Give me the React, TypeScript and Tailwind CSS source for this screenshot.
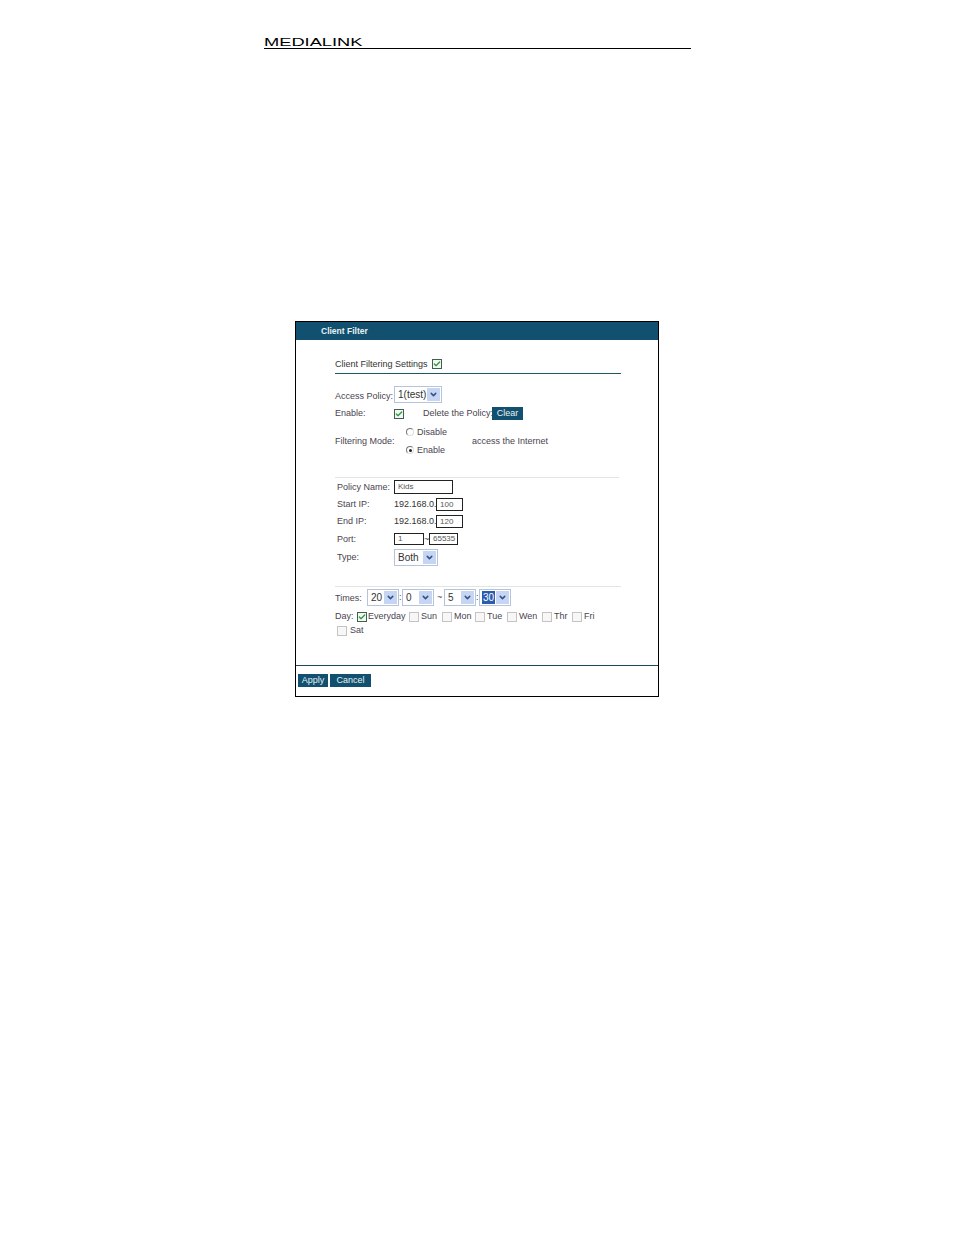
import { Check, ChevronDown } from "lucide-react";

const days = [
  { label: "Sun", width: "w-[33px]" },
  { label: "Mon", width: "w-[33px]" },
  { label: "Tue", width: "w-[32px]" },
  { label: "Wen", width: "w-[35px]" },
  { label: "Thr", width: "w-[30px]" },
  { label: "Fri", width: "w-[24px]" },
];

function CheckBox({ checked = false }: { checked?: boolean }) {
  return (
    <span
      className={`flex h-[10px] w-[10px] shrink-0 items-center justify-center border ${
        checked ? "border-[#3f5f4f] bg-[#f4f8f4]" : "border-[#c4c4c4] bg-[#f7f7f7]"
      }`}
    >
      {checked && <Check className="h-[8px] w-[8px] text-[#2e9a3c]" strokeWidth={4} />}
    </span>
  );
}

function Radio({ checked = false }: { checked?: boolean }) {
  return (
    <span className="flex h-[8px] w-[8px] shrink-0 items-center justify-center rounded-full border border-t-[#777] border-r-[#ddd] border-b-[#ddd] border-l-[#777] bg-white">
      {checked && <span className="h-[3px] w-[3px] rounded-full bg-[#222]" />}
    </span>
  );
}

function Select({
  value,
  width,
  selected = false,
}: {
  value: string;
  width: string;
  selected?: boolean;
}) {
  return (
    <div className={`flex h-[17px] items-center justify-between border border-[#b4c4dc] bg-white pr-px pl-[2px] ${width}`}>
      <span className={`px-px text-[10px] leading-[13px] ${selected ? "bg-[#2a5db0] text-white" : "text-[#333]"}`}>
        {value}
      </span>
      <span className="flex h-[13px] w-[13px] items-center justify-center bg-[#c6d6f2]">
        <ChevronDown className="h-[9px] w-[9px] text-[#32508c]" strokeWidth={4} />
      </span>
    </div>
  );
}

function TextBox({ value, className }: { value: string; className: string }) {
  return (
    <div className={`flex items-center border border-[#222] bg-white pl-[3px] text-[8px] text-[#555] ${className}`}>
      {value}
    </div>
  );
}

function Btn({ label, className }: { label: string; className: string }) {
  return (
    <button className={`flex h-[13px] items-center justify-center bg-[#11506f] text-[9px] text-[#e8f0f4] ${className}`}>
      {label}
    </button>
  );
}

export default function App() {
  return (
    <div className="h-[1235px] w-[954px] overflow-hidden bg-white font-['Liberation_Sans',Arial,sans-serif] text-[9px] leading-none whitespace-nowrap text-[#4a4450]">
      {/* Page header */}
      <div className="ml-[264px] flex h-[49px] w-[427px] items-end border-b border-black">
        <span className="origin-left scale-x-[1.66] text-[11px] leading-[11px] font-normal text-black">
          MEDIALINK
        </span>
      </div>

      {/* Client filter panel */}
      <div className="mt-[272px] ml-[295px] h-[376px] w-[364px] border border-black">
        <div className="flex h-[18px] items-center bg-[#11506f] pl-[25px] text-[8.5px] font-bold text-[#e8f0f4]">
          Client Filter
        </div>

        <div className="h-[325px] pt-[14px] pl-[39px]">
          <div className="flex h-[20px] w-[286px] items-start gap-[4px] border-b border-[#1d5a5a] pt-[5px] text-[#333]">
            <span className="pt-[1px]">Client Filtering Settings</span>
            <CheckBox checked />
          </div>

          <div className="mt-[12px] flex h-[17px] items-center">
            <span className="w-[59px] pt-[3px]">Access Policy:</span>
            <Select value="1(test)" width="w-[48px]" />
          </div>

          <div className="mt-[4px] flex h-[13px] items-center">
            <span className="w-[59px]">Enable:</span>
            <CheckBox checked />
            <span className="ml-[19px] w-[69px]">Delete the Policy:</span>
            <Btn label="Clear" className="w-[31px]" />
          </div>

          <div className="mt-[6px] flex h-[30px] items-center">
            <span className="w-[71px]">Filtering Mode:</span>
            <div className="flex w-[66px] flex-col gap-[9px]">
              <div className="flex items-center gap-[3px]">
                <Radio />
                <span>Disable</span>
              </div>
              <div className="flex items-center gap-[3px]">
                <Radio checked />
                <span>Enable</span>
              </div>
            </div>
            <span>access the Internet</span>
          </div>

          <div className="mt-[21px] w-[284px] border-t border-[#e4e4e4]" />

          <div className="mt-[2px] ml-[2px] flex h-[14px] items-center">
            <span className="w-[57px]">Policy Name:</span>
            <TextBox value="Kids" className="h-[14px] w-[59px]" />
          </div>

          <div className="mt-[4px] ml-[2px] flex h-[13px] items-center">
            <span className="w-[57px]">Start IP:</span>
            <span className="w-[42px] text-[#333]">192.168.0.</span>
            <TextBox value="100" className="h-[13px] w-[27px]" />
          </div>

          <div className="mt-[4px] ml-[2px] flex h-[13px] items-center">
            <span className="w-[57px]">End IP:</span>
            <span className="w-[42px] text-[#333]">192.168.0.</span>
            <TextBox value="120" className="h-[13px] w-[27px]" />
          </div>

          <div className="mt-[5px] ml-[2px] flex h-[12px] items-center">
            <span className="w-[57px]">Port:</span>
            <TextBox value="1" className="h-[12px] w-[30px]" />
            <span className="w-[5px]">~</span>
            <TextBox value="65535" className="h-[12px] w-[29px]" />
          </div>

          <div className="mt-[4px] ml-[2px] flex h-[17px] items-center">
            <span className="w-[57px]">Type:</span>
            <Select value="Both" width="w-[44px]" />
          </div>

          <div className="mt-[20px] w-[286px] border-t border-[#e4e4e4]" />

          <div className="mt-[2px] flex h-[17px] items-center">
            <span className="w-[32px] pt-[2px]">Times:</span>
            <Select value="20" width="w-[32px]" />
            <span className="w-[3px]">:</span>
            <Select value="0" width="w-[32px]" />
            <span className="w-[10px] pl-[3px]">~</span>
            <Select value="5" width="w-[32px]" />
            <span className="w-[3px]">:</span>
            <Select value="30" width="w-[32px]" selected />
          </div>

          <div className="mt-[5px] flex h-[11px] items-center">
            <span className="w-[22px]">Day:</span>
            <CheckBox checked />
            <span className="ml-px w-[41px]">Everyday</span>
            {days.map((d) => (
              <div key={d.label} className={`flex items-center gap-[2px] ${d.width}`}>
                <CheckBox />
                <span>{d.label}</span>
              </div>
            ))}
          </div>

          <div className="mt-[3px] ml-[2px] flex h-[11px] items-center gap-[3px]">
            <CheckBox />
            <span>Sat</span>
          </div>
        </div>

        {/* Footer */}
        <div className="flex h-[31px] gap-[2px] border-t border-[#1d4a5a] pt-[8px] pl-[2px]">
          <Btn label="Apply" className="w-[30px]" />
          <Btn label="Cancel" className="w-[41px]" />
        </div>
      </div>
    </div>
  );
}
